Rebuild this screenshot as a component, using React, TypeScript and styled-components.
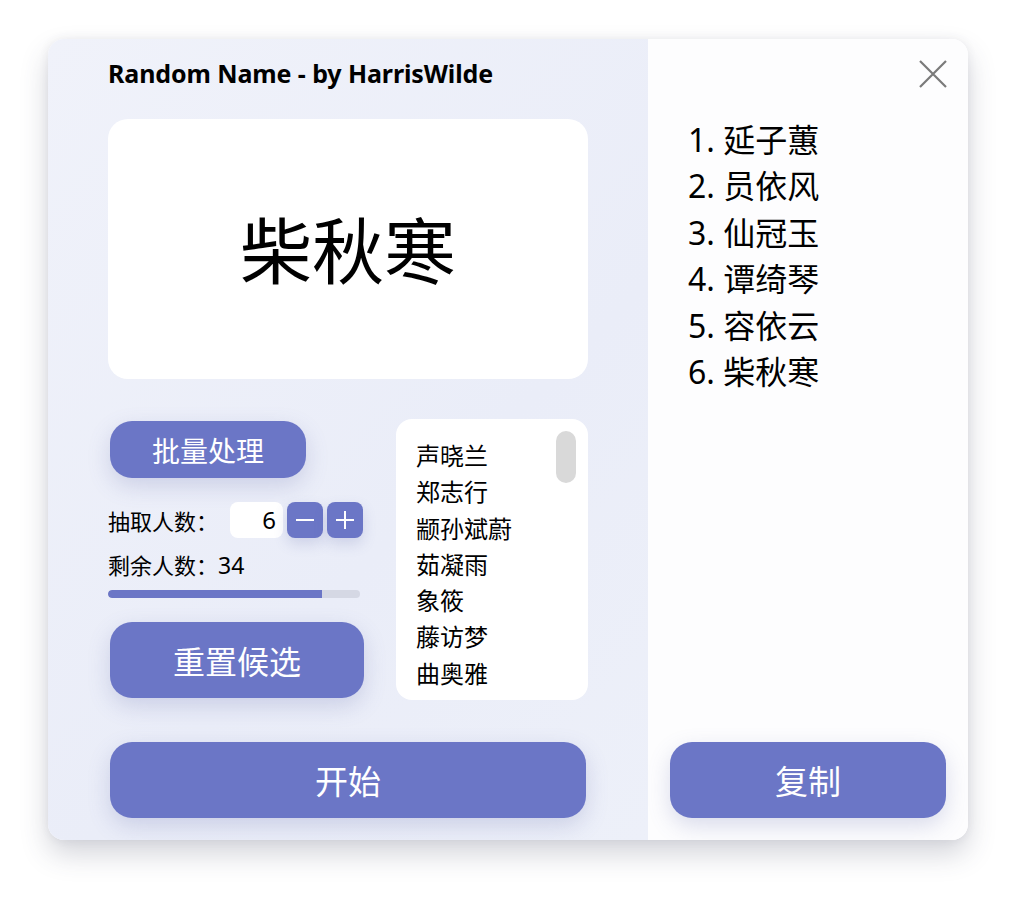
import styled, { createGlobalStyle } from 'styled-components'

const GlobalStyle = createGlobalStyle`
  html, body {
    margin: 0;
    padding: 0;
    background: #ffffff;
  }
  body {
    font-family: "Noto Sans", "Noto Sans CJK SC", sans-serif;
    color: #000;
  }
`

const purple = '#6b76c6'

const Page = styled.div`
  width: 1016px;
  height: 922px;
  padding: 39px 48px 0;
  box-sizing: border-box;
`

const Window = styled.div`
  width: 920px;
  height: 801px;
  display: flex;
  border-radius: 16px;
  overflow: hidden;
  box-shadow: 0 14px 28px rgba(60, 64, 90, 0.22), 0 0 10px rgba(60, 64, 90, 0.08);
`

const LeftPane = styled.div`
  width: 600px;
  background: linear-gradient(135deg, #f0f2fa 0%, #eaedf8 60%, #edf0f9 100%);
  padding: 0 60px;
  box-sizing: border-box;
  display: flex;
  flex-direction: column;
`

const Title = styled.h1`
  margin: 17px 0 0;
  font-size: 25px;
  line-height: 34px;
  font-weight: 700;
  letter-spacing: -0.1px;
`

const Display = styled.div`
  margin-top: 29px;
  height: 260px;
  border-radius: 20px;
  background: #fff;
  display: flex;
  align-items: center;
  justify-content: center;
  font-size: 72px;
  padding-bottom: 6px;
  box-sizing: border-box;
  font-family: "Noto Sans CJK SC", sans-serif;
`

const Middle = styled.div`
  margin-top: 42px;
  display: flex;
  gap: 32px;
`

const Controls = styled.div`
  width: 256px;
  display: flex;
  flex-direction: column;
`

const Button = styled.button<{ $w: string; $h: number; $size: number }>`
  width: ${p => p.$w};
  height: ${p => p.$h}px;
  margin-left: 2px;
  border: none;
  border-radius: 22px;
  background: ${purple};
  color: #fff;
  font-family: "Noto Sans CJK SC", sans-serif;
  font-size: ${p => p.$size}px;
  box-shadow: 0 8px 22px rgba(90, 100, 170, 0.22);
  padding: 0;
  cursor: pointer;
`

const CountRow = styled.div`
  margin-top: 24px;
  display: flex;
  align-items: center;
  height: 36px;
`

const Label = styled.span`
  font-size: 22px;
  font-family: "Noto Sans CJK SC", sans-serif;
  width: 122px;
`

const NumberBox = styled.div`
  width: 53px;
  height: 36px;
  background: #fff;
  border-radius: 8px;
  box-sizing: border-box;
  padding-right: 7px;
  text-align: right;
  font-size: 24px;
  line-height: 36px;
`

const StepButton = styled.button`
  width: 36px;
  height: 36px;
  margin-left: 4px;
  border: none;
  border-radius: 8px;
  background: ${purple};
  display: flex;
  align-items: center;
  justify-content: center;
  padding: 0;
  box-shadow: 0 6px 14px rgba(90, 100, 170, 0.2);
`

const Remain = styled.div`
  margin-top: 9px;
  font-size: 22px;
  line-height: 34px;
  font-family: "Noto Sans CJK SC", sans-serif;

  span {
    font-family: "Noto Sans", sans-serif;
    font-size: 23px;
  }
`

const Progress = styled.div`
  margin-top: 8px;
  width: 252px;
  height: 8px;
  border-radius: 4px;
  background: #d5d8e4;
  overflow: hidden;
`

const ProgressFill = styled.div`
  height: 100%;
  background: ${purple};
  border-radius: 4px 0 0 4px;
`

const ResetWrap = styled.div`
  margin-top: 24px;
`

const ListBox = styled.div`
  width: 192px;
  height: 281px;
  background: #fff;
  border-radius: 16px;
  margin-top: -2px;
  position: relative;
  box-sizing: border-box;
  padding: 18px 0 0 20px;
  overflow: hidden;
`

const ListItem = styled.div`
  font-size: 24px;
  line-height: 36.3px;
  font-family: "Noto Sans CJK SC", sans-serif;
`

const Thumb = styled.div`
  position: absolute;
  right: 12px;
  top: 12px;
  width: 20px;
  height: 52px;
  border-radius: 10px;
  background: #d9d9d9;
`

const Bottom = styled.div`
  margin-top: 42px;
`

const RightPane = styled.div`
  width: 320px;
  background: #fdfdfe;
  display: flex;
  flex-direction: column;
  padding: 20px 20px 0 22px;
  box-sizing: border-box;
`

const CloseRow = styled.div`
  display: flex;
  justify-content: flex-end;
  height: 30px;
`

const Results = styled.ol`
  list-style: none;
  margin: 28px 0 0;
  padding: 0 0 0 18px;
`

const Result = styled.li`
  font-size: 32px;
  line-height: 46.4px;
  font-family: "Noto Sans", "Noto Sans CJK SC", sans-serif;
`

const CopyWrap = styled.div`
  margin-top: auto;
  margin-bottom: 22px;
  margin-left: -2px;
`

const pool = ['声晓兰', '郑志行', '颛孙斌蔚', '茹凝雨', '象筱', '藤访梦', '曲奥雅']
const picked = ['延子蕙', '员依风', '仙冠玉', '谭绮琴', '容依云', '柴秋寒']

function App() {
  const remaining = 34
  const total = 40

  return (
    <Page>
      <GlobalStyle />
      <Window>
        <LeftPane>
          <Title>Random Name - by HarrisWilde</Title>
          <Display>柴秋寒</Display>
          <Middle>
            <Controls>
              <Button $w="196px" $h={57} $size={28}>批量处理</Button>
              <CountRow>
                <Label>抽取人数：</Label>
                <NumberBox>6</NumberBox>
                <StepButton>
                  <svg width="20" height="20" viewBox="0 0 20 20">
                    <path d="M1 10h18" stroke="#fff" strokeWidth="2" />
                  </svg>
                </StepButton>
                <StepButton>
                  <svg width="20" height="20" viewBox="0 0 20 20">
                    <path d="M1 10h18M10 1v18" stroke="#fff" strokeWidth="2" />
                  </svg>
                </StepButton>
              </CountRow>
              <Remain>剩余人数：<span>{remaining}</span></Remain>
              <Progress>
                <ProgressFill style={{ width: `${(remaining / total) * 100}%` }} />
              </Progress>
              <ResetWrap>
                <Button $w="254px" $h={76} $size={32}>重置候选</Button>
              </ResetWrap>
            </Controls>
            <ListBox>
              {pool.map(name => <ListItem key={name}>{name}</ListItem>)}
              <Thumb />
            </ListBox>
          </Middle>
          <Bottom>
            <Button $w="476px" $h={76} $size={33}>开始</Button>
          </Bottom>
        </LeftPane>
        <RightPane>
          <CloseRow>
            <svg width="30" height="30" viewBox="0 0 30 30">
              <path d="M2 2L28 28M28 2L2 28" stroke="#7a7a7a" strokeWidth="2.2" />
            </svg>
          </CloseRow>
          <Results>
            {picked.map((name, i) => <Result key={name}>{i + 1}. {name}</Result>)}
          </Results>
          <CopyWrap>
            <Button $w="276px" $h={76} $size={33}>复制</Button>
          </CopyWrap>
        </RightPane>
      </Window>
    </Page>
  )
}

export default App
